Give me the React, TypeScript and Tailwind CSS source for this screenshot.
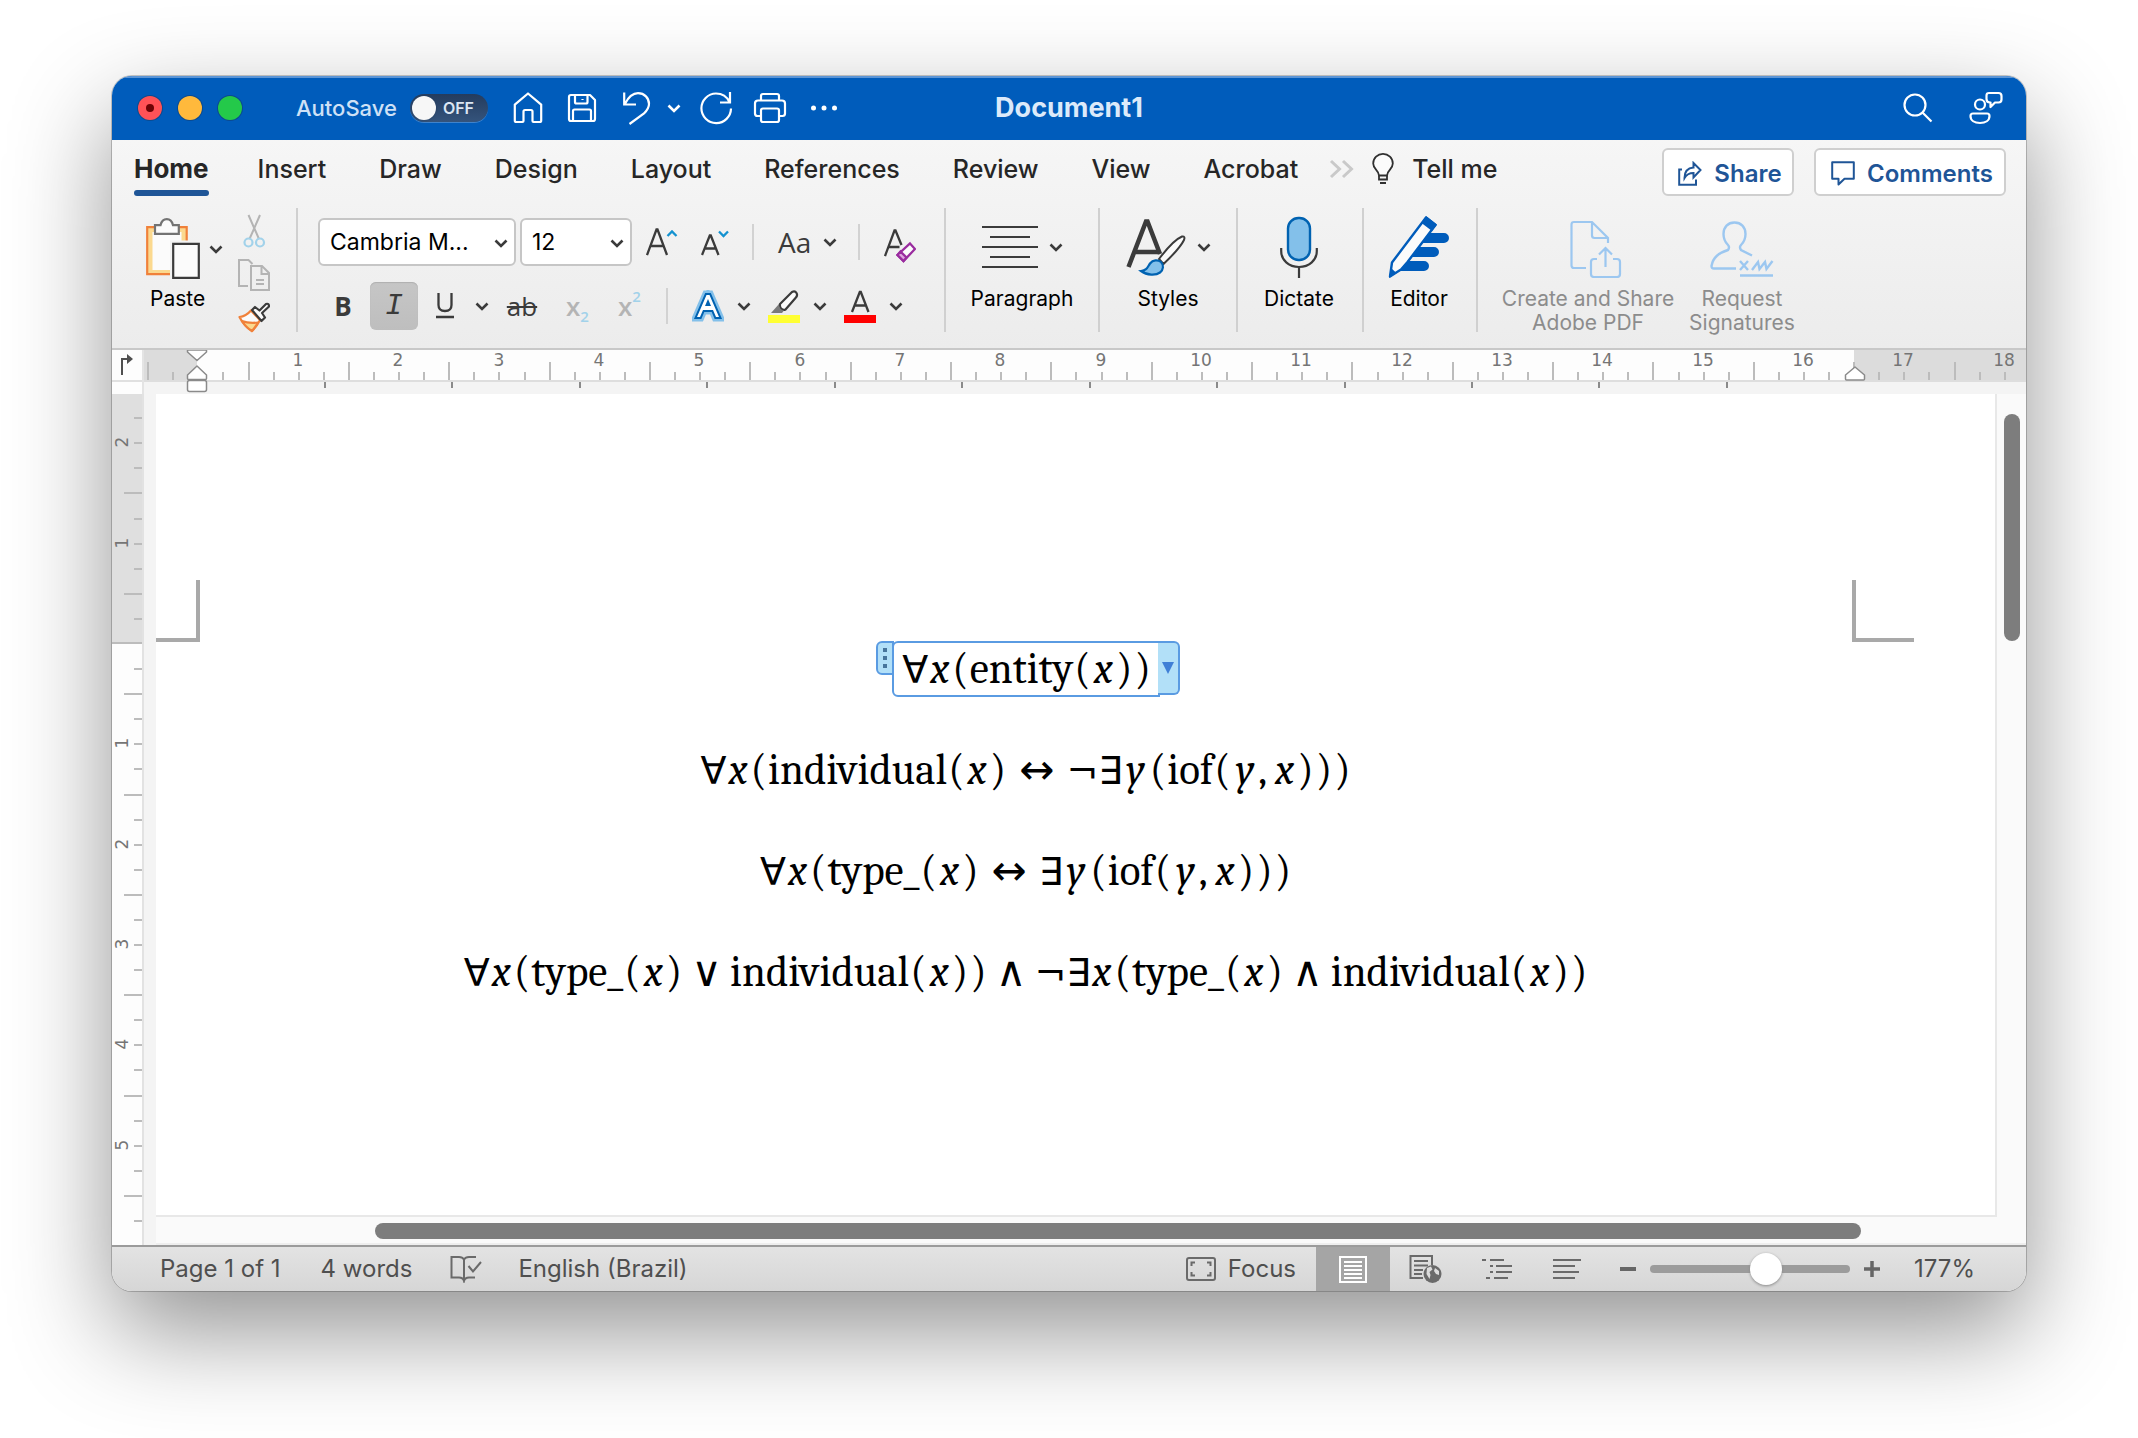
import { useState, type ReactNode } from "react";

const INK = "#3b3b3b";

/* ---------- small shared pieces ---------- */

function Chevron({ color = "#3b3b3b", size = 14 }: { color?: string; size?: number }) {
  return (
    <svg width={size} height={size} viewBox="0 0 14 14" fill="none" stroke={color} strokeWidth="2.6" className="shrink-0">
      <path d="M1.5 4.5 7 10l5.5-5.5" />
    </svg>
  );
}

function Divider() {
  return <div className="w-0.5 shrink-0 self-stretch bg-[#d0d0d0]" />;
}

function ShortDivider({ className }: { className: string }) {
  return <div className={`h-9 w-0.5 shrink-0 bg-[#d2d2d2] ${className}`} />;
}

/* ---------- title bar ---------- */

function TitleBar() {
  const [saving, setSaving] = useState(false);
  return (
    <header className="relative flex h-16 items-center border-t-2 border-[#5b95d6] bg-[#005cbb] pb-0.5 text-white">
      <div className="flex gap-4 pl-[26px]">
        <button aria-label="Close" className="flex size-6 items-center justify-center rounded-full bg-[#ff5257] ring-1 ring-[#0b4a8f]">
          <span className="size-2 rounded-full bg-[#6d0306]" />
        </button>
        <button aria-label="Minimize" className="size-6 rounded-full bg-[#ffb93c] ring-1 ring-[#0b4a8f]" />
        <button aria-label="Zoom window" className="size-6 rounded-full bg-[#24c94a] ring-1 ring-[#0b4a8f]" />
      </div>
      <label className="ml-[54px] flex items-center gap-[13px] text-[22px] font-medium text-[#cfe1f6]">
        AutoSave
        <input type="checkbox" className="sr-only" checked={saving} onChange={() => setSaving(!saving)} />
        <span className="flex h-7 w-[78px] items-center rounded-full bg-linear-to-b from-[#243c5e] to-[#35547c] pl-0.5 shadow-[0_1px_0_#3f83cc]">
          <span className="size-6 rounded-full bg-[#f7f7f7] shadow" />
          <span className="ml-[7px] text-base font-semibold text-[#dbe6f3]">OFF</span>
        </span>
      </label>
      <div className="ml-[25px] flex items-center">
        <button aria-label="Home">
          <svg width="30" height="34" viewBox="0 0 30 34" fill="none" stroke="white" strokeWidth="2.2" strokeLinejoin="round">
            <path d="M15 2.5 1.8 13.6V29.500q0 1.500 1.500 1.500H9.500q1 0 1-1V20.500q0-1.500 1.500-1.500h6q1.500 0 1.500 1.500V30q0 1 1 1h6.200q1.500 0 1.500-1.500V13.600Z" />
          </svg>
        </button>
        <button aria-label="Save" className="ml-6">
          <svg width="30" height="30" viewBox="0 0 30 30" fill="none" stroke="white" strokeWidth="2.2" strokeLinejoin="round">
            <path d="M4 2h19l5 5v19q0 2-2 2H4q-2 0-2-2V4q0-2 2-2ZM8 2v7q0 1.500 1.500 1.500H19q1.500 0 1.500-1.500V2M15.500 6v1M6 28V18q0-1.500 1.500-1.500h15Q24 16.500 24 18v10" />
          </svg>
        </button>
        <button aria-label="Undo" className="ml-[25px]">
          <svg width="30" height="34" viewBox="0 0 30 34" fill="none" stroke="white" strokeWidth="2.200">
            <path d="M2.200 1.500V13.500H14M3 12.800C6 7 10 2.200 16 2.200C22.500 2.200 27 7 27 13C27 17 25 19.500 22 22.500L7.500 33" />
          </svg>
        </button>
        <button aria-label="Undo options" className="ml-[15px]">
          <Chevron color="#ffffff" />
        </button>
        <button aria-label="Redo" className="ml-[18px]">
          <svg width="34" height="34" viewBox="0 0 34 34" fill="none" stroke="white" strokeWidth="2.200">
            <path d="M31 1v10.500H21M30.500 11A15 15 0 0 0 17 2.500A14.800 14.800 0 1 0 32 17.500" />
          </svg>
        </button>
        <button aria-label="Print" className="ml-5">
          <svg width="34" height="32" viewBox="0 0 34 32" fill="none" stroke="white" strokeWidth="2.200" strokeLinejoin="round">
            <path d="M8 8V4q0-2 2-2h14q2 0 2 2v4M8 24H4.500Q2 24 2 21.500v-10Q2 8.500 5 8.500h24q3 0 3 3v10q0 2.500-2.500 2.500H26M10 16.500h14q2 0 2 2V28q0 2-2 2H10q-2 0-2-2v-9.500q0-2 2-2Z" />
          </svg>
        </button>
        <button aria-label="More commands" className="ml-[23px]">
          <svg width="28" height="8" viewBox="0 0 28 8" fill="white">
            <circle cx="3.500" cy="4" r="2.500" />
            <circle cx="14" cy="4" r="2.500" />
            <circle cx="24.500" cy="4" r="2.500" />
          </svg>
        </button>
      </div>
      <h1 className="absolute left-1/2 -translate-x-1/2 text-[27px] font-bold text-[#dceafa]">Document1</h1>
      <div className="ml-auto flex items-center gap-9 pr-[23px]">
        <button aria-label="Search">
          <svg width="30" height="30" viewBox="0 0 30 30" fill="none" stroke="white" strokeWidth="2.200">
            <circle cx="12" cy="12" r="10.500" />
            <path d="m19.500 19.500 9 9" />
          </svg>
        </button>
        <button aria-label="Share and presence">
          <svg width="34" height="34" viewBox="0 0 34 34" fill="none" stroke="white" strokeWidth="2.200" strokeLinejoin="round">
            <circle cx="11" cy="13.500" r="5" />
            <path d="M4 22.500h14q2.500 0 2.500 2.500C20.500 29.500 16.500 32 11 32S1.500 29.500 1.500 25Q1.500 22.500 4 22.500ZM20 2h9.500Q32.500 2 32.500 5v3.500q0 3-3 3H26L21.500 16V11.500h-.5Q17.500 11.500 17.500 8V4.500Q17.500 2 20 2Z" />
          </svg>
        </button>
      </div>
    </header>
  );
}

/* ---------- tab strip ---------- */

const TABS = ["Home", "Insert", "Draw", "Design", "Layout", "References", "Review", "View", "Acrobat"];

function TabStrip() {
  return (
    <div className="flex h-[68px] items-start justify-between pr-5 pl-[22px]">
      <nav className="flex items-start gap-[53px] pt-3 text-[25px] leading-[34px] font-medium text-[#262626]">
        {TABS.map((tab, i) => (
          <button key={tab} className={i === 0 ? "-mr-1 text-[26px] font-bold" : ""}>
            {tab}
            {i === 0 && <span className="mt-1 block h-1.5 rounded-full bg-[#1f5597]" />}
          </button>
        ))}
        <button className="-ml-[22px] flex items-center" aria-label="Tell me">
          <svg width="26" height="34" viewBox="0 0 26 34" fill="none" stroke="#c9c9c9" strokeWidth="3">
            <path d="m2 9 8.500 8L2 25M14 9l8.500 8L14 25" />
          </svg>
          <svg width="22" height="32" viewBox="0 0 22 32" fill="none" stroke="#303030" strokeWidth="1.800" className="ml-[17px]">
            <path fill="#fbfbfb" d="M7 22.500C7 17 1.200 16.500 1.200 10.500A9.800 9.600 0 0 1 20.800 10.500C20.800 16.500 15 17 15 22.500Z" />
            <path d="M7 22.500v4h8v-4M8 30h6" />
          </svg>
          <span className="ml-[18px]">Tell me</span>
        </button>
      </nav>
      <div className="flex gap-5 pt-2 text-2xl font-semibold text-[#1f5597]">
        <button className="flex h-12 w-[132px] items-center justify-center gap-3 rounded-md border-2 border-[#cfcfcf] bg-white pt-1 pl-1">
          <svg width="24" height="25" viewBox="0 0 24 25" fill="none" stroke="#1f5597" strokeWidth="2" className="-mt-0.5">
            <path d="M4 8.500H1.200V23.800H18V18.500M6.500 17C6.500 11 9.500 7 15.500 6.500V2L22.500 9l-7 7.500V12C11.500 12 8.500 13.500 6.500 17Z" />
          </svg>
          Share
        </button>
        <button className="flex h-12 w-48 items-center justify-center gap-3 rounded-md border-2 border-[#cfcfcf] bg-white pt-1 pl-1">
          <svg width="24" height="25" viewBox="0 0 24 25" fill="none" stroke="#1f5597" strokeWidth="2" strokeLinejoin="round" className="-mt-0.5">
            <path d="M1.200 1.200h21.600v16.600H13.500L7.500 23.500V17.800H1.200Z" />
          </svg>
          Comments
        </button>
      </div>
    </div>
  );
}

/* ---------- ribbon ---------- */

function PasteIcon() {
  return (
    <svg width="54" height="62" viewBox="0 0 54 62" fill="none">
      <path fill="#fbd98f" stroke="#f0813a" strokeWidth="2.200" d="M1.200 9.200h39.500v47H1.200Z" />
      <path fill="#fbfbfb" d="M6.500 14h29v38h-29Z" />
      <path fill="#fbfbfb" stroke="#737373" strokeWidth="2.200" d="M9 7.200h5.500C15.500 3 17.500 1.200 20.800 1.200S26 3 27 7.200h5.800v8.600H9Z" />
      <path fill="#f2f2f2" d="M24 22.500h30V62H24Z" />
      <path fill="#fbfbfb" stroke={INK} strokeWidth="2.200" d="M27.200 25.800h25.600v34H27.200Z" />
    </svg>
  );
}

function ClipboardGroup() {
  return (
    <div className="flex shrink-0 pt-1.5 pr-[26px] pl-[34px]">
      <button className="flex w-[92px] flex-col items-start">
        <span className="flex items-center gap-[9px] pt-1">
          <PasteIcon />
          <Chevron />
        </span>
        <span className="mt-[5px] ml-1 text-[21px] leading-7">Paste</span>
      </button>
      <div className="flex flex-col gap-[11px]">
        <button aria-label="Cut">
          <svg width="32" height="34" viewBox="0 0 32 34" fill="none">
            <path stroke="#b4b4b4" strokeWidth="2" d="M10.500 1 21 25M22 1 11.500 25" />
            <circle cx="10.500" cy="28.500" r="4" stroke="#a2d2ea" strokeWidth="2.200" />
            <circle cx="22" cy="28.500" r="4" stroke="#a2d2ea" strokeWidth="2.200" />
          </svg>
        </button>
        <button aria-label="Copy">
          <svg width="32" height="32" viewBox="0 0 32 32" fill="none" stroke="#b4b4b4" strokeWidth="2">
            <path d="M10 27H1V1h9.500l4 4M13 7h11l7 7v17H13ZM23.500 7v8H31M18 21h8M18 25h8" />
          </svg>
        </button>
        <button aria-label="Format painter">
          <svg width="32" height="31" viewBox="0 0 32 31" fill="none" strokeWidth="2.200" strokeLinejoin="round">
            <path fill="#fbfbfb" stroke="#f0813a" d="M1.500 15C6 14.500 9.500 12.500 13 8.500L22 18C20 22 17.500 25.500 14 29C9 26 4.500 21 1.500 15Z" />
            <path fill="#fbd98f" stroke="#f0813a" d="M4 19c5 2 9 2.200 16 1.500-2 3.500-3.500 5.500-6 8.500C10.500 27 7 23.500 4 19Z" />
            <path fill="#fbfbfb" stroke={INK} d="m14 8 3-3 4.500 3.500L28 2q3-1 3 2.500L24 11l3 4.500-3.500 3.500Z" />
          </svg>
        </button>
      </div>
    </div>
  );
}

function Picker({ label, options, className }: { label: string; options: string[]; className: string }) {
  return (
    <div className={`relative h-12 shrink-0 ${className}`}>
      <select aria-label={label} className="h-full w-full appearance-none rounded-md border-2 border-[#c6c6c6] bg-white pl-2.5 text-[23px] text-black">
        {options.map((o) => (
          <option key={o}>{o}</option>
        ))}
      </select>
      <span className="pointer-events-none absolute top-[18px] right-2">
        <Chevron />
      </span>
    </div>
  );
}

function FontGroup() {
  return (
    <div className="flex w-[646px] shrink-0 flex-col gap-4 pt-2.5 pl-5">
      <div className="flex h-12 items-center">
        <Picker label="Font" options={["Cambria M..."]} className="w-[198px]" />
        <Picker label="Font size" options={["12"]} className="ml-1 w-28" />
        <button aria-label="Increase font size" className="ml-3.5">
          <svg width="32" height="30" viewBox="0 0 32 30" fill="none" stroke={INK} strokeWidth="2.300">
            <path d="M1 28 10.500 2.500h1L21 28M4.500 19h13.500" />
            <path stroke="#1492d0" d="m21.500 9 4.500-4.500L30.500 9" />
          </svg>
        </button>
        <button aria-label="Decrease font size" className="ml-[23px]">
          <svg width="32" height="30" viewBox="0 0 32 30" fill="none" stroke={INK} strokeWidth="2.300">
            <path d="M1 28 8.800 8.500h1L17.500 28M4 21.500h10.500" />
            <path stroke="#1492d0" d="M18 4.500 22.500 9 27 4.500" />
          </svg>
        </button>
        <ShortDivider className="ml-[19px]" />
        <button aria-label="Change case" className="ml-6 flex items-center gap-3 text-[28px] text-[#3b3b3b]">
          <span className="font-['Open_Sans']">Aa</span>
          <Chevron />
        </button>
        <ShortDivider className="ml-[21px]" />
        <button aria-label="Clear formatting" className="ml-6 pt-1.5">
          <svg width="32" height="35" viewBox="0 0 32 35" fill="none" stroke={INK} strokeWidth="2.300">
            <path d="M1 28 10.500 2.500h1L17.500 17M4.500 19h11" />
            <path fill="#fbfbfb" stroke="#9a2c9f" d="M26 15.500 31 21 19.500 33 13.500 27Z" />
            <path fill="#dca5dd" stroke="#9a2c9f" d="m16.500 23.500 6 6-3 3.500-6-6Z" />
          </svg>
        </button>
      </div>
      <div className="flex h-12 items-center text-[#3b3b3b]">
        <button aria-label="Bold" className="w-[52px] pr-0.5 text-center text-[26px] font-bold">
          <span className="font-['Open_Sans']">B</span>
        </button>
        <button aria-label="Italic" aria-pressed="true" className="flex h-12 w-12 items-center justify-center rounded-md bg-linear-to-b from-[#c6c6c6] to-[#bebebe] font-['Liberation_Mono'] text-[30px] italic shadow-[inset_0_1px_1px_#b0b0b0]">
          I
        </button>
        <button aria-label="Underline" className="ml-[18px]">
          <svg width="18" height="26" viewBox="0 0 18 26" fill="none" stroke={INK} strokeWidth="2.300">
            <path d="M2.500 0v12c0 4 2.500 6 6.500 6s6.500-2 6.500-6V0M0 24h18" />
          </svg>
        </button>
        <button aria-label="Underline style" className="ml-[21px]">
          <Chevron />
        </button>
        <button aria-label="Strikethrough" className="ml-[17px] w-8 text-center font-['Open_Sans'] text-[26px] line-through decoration-2">
          ab
        </button>
        <button aria-label="Subscript" className="ml-7 flex h-9 w-[26px] font-['Open_Sans'] text-[26px] font-semibold text-[#b4b4b4]">
          <span className="self-center leading-9">x</span>
          <span className="self-end text-[15px] leading-4 text-[#a2d2ea]">2</span>
        </button>
        <button aria-label="Superscript" className="ml-[26px] flex h-9 w-[26px] font-['Open_Sans'] text-[26px] font-semibold text-[#b4b4b4]">
          <span className="self-center leading-9">x</span>
          <span className="self-start text-[15px] leading-4 text-[#a2d2ea]">2</span>
        </button>
        <ShortDivider className="ml-[22px]" />
        <button aria-label="Text effects" className="ml-6">
          <svg width="32" height="32" viewBox="0 0 32 32" fill="none" strokeLinejoin="miter">
            <path stroke="#83c0ea" strokeWidth="9" d="M5 27 14.500 5h3L27 27h-3l-3-7H11l-3 7ZM12.500 16h7L16 8Z" />
            <path fill="#fff" stroke="#0062b1" strokeWidth="4" d="M5 27 14.500 5h3L27 27h-3l-3-7H11l-3 7ZM12.500 16h7L16 8Z" />
            <path fill="#fff" d="M5 27 14.500 5h3L27 27h-3l-3-7H11l-3 7Z" />
            <path fill="#0062b1" d="m13 16 3-7 3 7Z" />
          </svg>
        </button>
        <button aria-label="Text effects options" className="ml-[13px]">
          <Chevron />
        </button>
        <button aria-label="Highlight color" className="ml-[17px]">
          <svg width="32" height="33" viewBox="0 0 32 33" fill="none">
            <path fill="#fbfbfb" stroke={INK} strokeWidth="2.200" strokeLinejoin="round" d="m12 14 12-12q3-1.500 4.500 1T27.500 8L17.500 19.500q-2 1-4-.5T12 14Z" />
            <path fill="#7a7a7a" d="M11 14c0 4 2 6 5 6.500L14 23H3Z" />
            <path fill="#ffff33" d="M0 25h32v8H0Z" />
          </svg>
        </button>
        <button aria-label="Highlight options" className="ml-[13px]">
          <Chevron />
        </button>
        <button aria-label="Font color" className="ml-[17px]">
          <svg width="32" height="33" viewBox="0 0 32 33" fill="none">
            <path stroke={INK} strokeWidth="2.300" d="M8 22 15.800 2h1L24.500 22M11 15.500h10.500" />
            <path fill="#ff0000" d="M0 25h32v8H0Z" />
          </svg>
        </button>
        <button aria-label="Font color options" className="ml-[13px]">
          <Chevron />
        </button>
      </div>
    </div>
  );
}

function BigButton({ lines, icon, menu, className }: { lines: string[]; icon: ReactNode; menu?: boolean; className: string }) {
  return (
    <button className={`flex shrink-0 flex-col items-center justify-start pt-1.5 text-[21px] leading-6 ${className}`}>
      <span className="flex h-[65px] shrink-0 items-center gap-[11px]">
        {icon}
        {menu && <Chevron />}
      </span>
      <span className="mt-2">
        {lines.map((l) => (
          <span key={l} className="block whitespace-nowrap">
            {l}
          </span>
        ))}
      </span>
    </button>
  );
}

function Ribbon() {
  return (
    <div className="flex h-[124px] items-stretch">
      <ClipboardGroup />
      <Divider />
      <FontGroup />
      <Divider />
      <BigButton
        className="w-[152px]"
        lines={["Paragraph"]}
        menu
        icon={
          <svg width="56" height="44" viewBox="0 0 56 44" stroke={INK} strokeWidth="2">
            <path d="M0 2h56M8 12h40M0 22h56M8 32h40M0 42h56" />
          </svg>
        }
      />
      <Divider />
      <BigButton
        className="w-[136px]"
        lines={["Styles"]}
        menu
        icon={
          <svg width="60" height="58" viewBox="0 0 60 58" fill="none" className="ml-px">
            <path stroke={INK} strokeWidth="4.500" d="M2.500 49 20 3.500h1.500L34 36M9 34h25" />
            <path fill="#fbfbfb" stroke={INK} strokeWidth="2" d="M33 41C42 29 50 21 56 18.500q3.500-.5 2 3.500C54 30 47 37 37.500 46Z" />
            <path fill="#83c0ea" stroke="#0062b1" strokeWidth="2.200" d="M15 53c6-.5 6.500-4 9-7.500 3-4 8-4 11-1.500 3 3 2.500 8-1 10.500C30 57.500 21 57.500 15 53Z" />
          </svg>
        }
      />
      <Divider />
      <BigButton
        className="w-[124px] pr-0.5"
        lines={["Dictate"]}
        icon={
          <svg width="38" height="62" viewBox="0 0 38 62" fill="none">
            <rect x="8" y="2" width="22" height="42" rx="10.500" fill="#83c0ea" stroke="#0062b1" strokeWidth="2.400" />
            <path stroke={INK} strokeWidth="2.200" d="M1.200 32v3c0 9 7.500 16 17.800 16s17.800-7 17.800-16v-3M19 51v11" />
          </svg>
        }
      />
      <Divider />
      <BigButton
        className="w-[112px] pr-0.5"
        lines={["Editor"]}
        icon={
          <svg width="62" height="62" viewBox="0 0 62 62">
            <path fill="#005cbb" d="M34 17h22a5 5 0 0 1 0 10H28ZM25 31h21a5 5 0 0 1 0 10H20ZM16 45h20a5 5 0 0 1 0 10H10Z" />
            <path fill="#fbfbfb" stroke="#005cbb" strokeWidth="2.400" strokeLinejoin="round" d="M38 1.500 47.500 9 19.500 46 13 53.500 2 60.500 4 46.500Z" />
            <path fill="#005cbb" d="M38 0 49 8.500l-5 6.500L33.500 7ZM3 52l5.500 5L1 62Z" />
          </svg>
        }
      />
      <Divider />
      <BigButton
        className="ml-4 w-[188px] text-[#8c8c8c]"
        lines={["Create and Share", "Adobe PDF"]}
        icon={
          <svg width="52" height="58" viewBox="0 0 52 58" fill="none" stroke="#9cc7f0" strokeWidth="2.200" className="mt-1 ml-4">
            <path d="M16 48H4q-2.500 0-2.500-2.500v-41Q1.500 2 4 2H22L38 18v5M22 2v13.500q0 2.500 2.500 2.500H38M27 39H24q-3 0-3 3v12q0 3 3 3h23q3 0 3-3V42q0-3-3-3h-4M35.500 47V28.500M29 34.500 35.500 28l6.500 6.500" />
          </svg>
        }
      />
      <BigButton
        className="w-[120px] text-[#8c8c8c]"
        lines={["Request", "Signatures"]}
        icon={
          <svg width="64" height="56" viewBox="0 0 64 56" fill="none" stroke="#9cc7f0" strokeWidth="2.400" className="mt-1">
            <path d="M26 47.500H4q-2.500 0-2.500-2.500C3 36 9 32 18 29q2-3 0-5c-3-3-4.500-6.500-4.500-11C13.500 6 18 1.500 24.500 1.500S35.500 6 35.500 13c0 4.500-1.500 8-4.500 11q-2 2 0 5l11 5.500M30 40l8 9M38 40l-8 9M42 49l6-8 1.500 7 5.500-7 1.500 7 6-8M30 54.500h33" />
          </svg>
        }
      />
    </div>
  );
}

/* ---------- rulers ---------- */

const CM = 100.35;

function HorizontalRuler() {
  const ticks = Array.from({ length: 76 }, (_, i) => i - 2);
  const numbers = Array.from({ length: 18 }, (_, i) => i + 1);
  const stops = Array.from({ length: 12 }, (_, i) => i + 1);
  return (
    <div className="flex h-11 bg-[#f4f4f4]">
      <div className="w-8 shrink-0 border-r-2 border-[#e4e4e4] bg-[#fdfdfd]">
        <svg width="30" height="32" viewBox="0 0 30 32" fill="none" stroke="#4f4f4f" strokeWidth="2">
          <path d="M10 25V9h8" />
          <path fill="#4f4f4f" stroke="none" d="m15 4 6 5-6 5Z" />
          <path stroke="#e0e0e0" d="M0 31h30" />
        </svg>
      </div>
      <svg className="h-11 min-w-0 flex-1" role="img" aria-label="Horizontal ruler">
        <rect width="100%" height="32" fill="#fdfdfd" />
        <rect width="53" height="30" fill="#dcdcdc" />
        <rect x="1710" width="100%" height="30" fill="#dcdcdc" />
        <path d="M0 31H4000" stroke="#dedede" strokeWidth="2" />
        {ticks.map((t) => {
          const major = Math.abs(t % 4) === 2;
          return <rect key={t} x={Math.round(54.4 + (t * CM) / 4) - 1} y={major ? 12 : 22} width="2" height={major ? 18 : 8} fill="#bcbcbc" />;
        })}
        {numbers.map((n) => (
          <text key={n} x={Math.round(53.5 + n * CM)} y="16" textAnchor="middle" fontSize="17" fill="#757575" fontFamily="DejaVu Sans">
            {n}
          </text>
        ))}
        {stops.map((n) => (
          <rect key={n} x={Math.round(53.5 + n * 127.45) - 1} y="32" width="2" height="6" fill="#8a8a8a" />
        ))}
        <g fill="#fff" stroke="#8a8a8a" strokeWidth="1.500" strokeLinejoin="round">
          <path d="M43.500 0h19v2L53 10.500 43.500 2Z" />
          <path d="M53 16l9.500 9v3.500q0 1-1 1h-17q-1 0-1-1V25Z" />
          <rect x="43.500" y="30.500" width="19" height="11" rx="2" />
          <path d="M1711 17l9.500 8v4q0 1-1 1h-17q-1 0-1-1v-4Z" />
        </g>
      </svg>
    </div>
  );
}

function VerticalRuler() {
  const ticks = Array.from({ length: 33 }, (_, i) => i - 9);
  return (
    <svg className="w-8 shrink-0 self-stretch" role="img" aria-label="Vertical ruler">
      <rect width="30" height="100%" fill="#fdfdfd" />
      <rect width="30" height="249" fill="#dfdfdf" />
      <rect y="248" width="30" height="2" fill="#bcbcbc" />
      <rect x="30" width="2" height="100%" fill="#e2e2e2" />
      {ticks
        .filter((t) => t !== 0)
        .map((t) => {
          const major = Math.abs(t % 4) === 2;
          return <rect key={t} x={major ? 12 : 22} y={Math.round(250 + (t * CM) / 4) - 1} width={major ? 18 : 8} height="2" fill="#bcbcbc" />;
        })}
      {[-2, -1, 1, 2, 3, 4, 5].map((n) => (
        <text key={n} transform={`translate(16 ${Math.round(249 + n * CM)}) rotate(-90)`} textAnchor="middle" fontSize="17" fill="#757575" fontFamily="DejaVu Sans">
          {Math.abs(n)}
        </text>
      ))}
    </svg>
  );
}

/* ---------- document ---------- */

function Formula({ text }: { text: string }) {
  const parts = text.match(/[a-z]{3,}_?|[xy]|[()]|,|[∀∃¬]|↔|[∨∧]/g) ?? [];
  return (
    <span className="flex h-14 items-baseline text-[43px] leading-[56px] whitespace-nowrap text-black">
      {parts.map((p, i) => {
        if (p === "x") return <i key={i} className="px-0.5">{p}</i>;
        if (p === "y") return <i key={i} className="px-1">{p}</i>;
        if (p === "(" || p === ")") return <span key={i} className="px-px">{p}</span>;
        if (p === ",") return <span key={i} className="pr-1.5">{p}</span>;
        if (p === "∀" || p === "∃" || p === "¬") return <span key={i} className="font-['DejaVu_Sans'] text-[38px] leading-none">{p}</span>;
        if (p === "↔") return <span key={i} className="px-3 font-['DejaVu_Sans'] text-[42px] leading-none">{p}</span>;
        if (p === "∨" || p === "∧") return <span key={i} className="px-2 font-['DejaVu_Sans'] text-[42px] leading-none">{p}</span>;
        return <span key={i}>{p}</span>;
      })}
    </span>
  );
}

function DocumentArea() {
  return (
    <main className="flex min-h-0 flex-1 bg-[#fafafa]">
      <VerticalRuler />
      <div className="w-3 shrink-0 bg-[#f4f4f4]" />
      <div className="flex min-w-0 flex-1 flex-col">
        <div className="flex min-h-0 flex-1">
          <section className="relative flex min-w-0 flex-1 flex-col items-center gap-[45px] border-r-2 border-b-2 border-[#e8e8e8] bg-white pt-[247px] pr-[143px] pl-11 font-[Cambria,Caladea,'Liberation_Serif',serif]">
            <div className="absolute top-[186px] left-0 h-[62px] w-11 border-r-4 border-b-4 border-[#a9a9a9]" />
            <div className="absolute top-[186px] right-[81px] h-[62px] w-[62px] border-b-4 border-l-4 border-[#a9a9a9]" />
            <div className="relative flex h-14 items-center rounded-md rounded-r-none border-2 border-[#5a9be2] pr-1.5 pl-2">
              <button aria-label="Move equation" className="absolute -top-0.5 -left-[18px] flex h-[34px] w-[18px] flex-col items-center justify-center gap-1 rounded-l-md border-2 border-[#5a9be2] bg-[#b2e0f8]">
                <span className="size-1 bg-[#47759c]" />
                <span className="size-1 bg-[#47759c]" />
                <span className="size-1 bg-[#47759c]" />
              </button>
              <Formula text="∀x(entity(x))" />
              <button aria-label="Equation options" className="absolute -top-0.5 -right-[22px] flex h-[54px] w-[22px] items-center justify-center rounded-r-md border-2 border-l-0 border-[#5a9be2] bg-[#b2e0f8]">
                <svg width="12" height="12" viewBox="0 0 12 12" fill="#3f7fd6">
                  <path d="M0 0h12L6 12Z" />
                </svg>
              </button>
            </div>
            <Formula text="∀x(individual(x)↔¬∃y(iof(y,x)))" />
            <Formula text="∀x(type_(x)↔∃y(iof(y,x)))" />
            <Formula text="∀x(type_(x)∨individual(x))∧¬∃x(type_(x)∧individual(x))" />
          </section>
          <div className="flex w-[29px] shrink-0 justify-end pt-5 pr-1.5">
            <div className="h-[227px] w-4 rounded-full bg-[#7d7d7d]" />
          </div>
        </div>
        <div className="flex h-7 items-center border-b-2 border-[#eeeeee] pt-0.5 pr-[165px] pl-[219px]">
          <div className="h-4 flex-1 rounded-full bg-[#7d7d7d]" />
        </div>
      </div>
    </main>
  );
}

/* ---------- status bar ---------- */

function StatusBar() {
  const [zoom, setZoom] = useState(177);
  return (
    <footer className="flex h-[46px] items-center border-t-2 border-[#9b9b9b] bg-linear-to-b from-[#e3e3e3] to-[#d6d6d6] pl-12 text-2xl text-[#4f4f4f]">
      <button>Page 1 of 1</button>
      <button className="ml-10">4 words</button>
      <button aria-label="Proofing" className="ml-[38px]">
        <svg width="32" height="28" viewBox="0 0 32 28" fill="none" stroke="#6a6a6a" strokeWidth="2">
          <path d="M14 4.500Q12.500 2 9 2H1.500v20.500H9q4 0 5 3.500 1-3.500 5-3.500h6M14 26V4.500Q15.500 2 19 2h7M18.500 11l4.500 5.500L31 7" />
        </svg>
      </button>
      <button className="ml-9">English (Brazil)</button>
      <div className="ml-auto flex h-full items-center pr-[49px]">
        <button className="mr-5 flex items-center gap-3">
          <svg width="30" height="24" viewBox="0 0 30 24" fill="none" stroke="#6a6a6a" strokeWidth="2">
            <rect x="1" y="1" width="28" height="22" rx="2" />
            <path d="M5.500 9V5.500H9M21 5.500h3.500V9M24.500 15v3.500H21M9 18.500H5.500V15" />
          </svg>
          Focus
        </button>
        <button aria-label="Print layout" aria-pressed="true" className="flex h-full w-[74px] items-center justify-center bg-[#a5a5a5]">
          <svg width="28" height="27" viewBox="0 0 28 27" fill="none" stroke="white" strokeWidth="2">
            <path d="M1 1h26v25H1ZM5 6h18M5 10h18M5 14h18M5 18h18M5 22h18" />
          </svg>
        </button>
        <button aria-label="Web layout" className="ml-[19px]">
          <svg width="34" height="30" viewBox="0 0 34 30" fill="none" stroke="#6a6a6a" strokeWidth="2">
            <path d="M14 24H1.500V2H23v9M5 7h14M5 11.500h14M5 16h9M5 20h8" />
            <circle cx="23.500" cy="20" r="9" fill="#6a6a6a" stroke="none" />
            <path fill="#dcdcdc" stroke="none" d="m18 14 4-1.500 1.500 3-3 2.500 1 3-1 4-3-5ZM26 14l4 3v4l-3-1-2-3Z" />
          </svg>
        </button>
        <button aria-label="Outline" className="ml-[39px]">
          <svg width="30" height="22" viewBox="0 0 30 22" stroke="#6a6a6a" strokeWidth="2">
            <path d="M0 2h4M8 2h14M8 8h3M14 8h16M8 14h3M14 14h16M4 20h4M12 20h14" />
          </svg>
        </button>
        <button aria-label="Draft" className="ml-[41px]">
          <svg width="28" height="22" viewBox="0 0 28 22" stroke="#6a6a6a" strokeWidth="2">
            <path d="M0 2h28M0 8h22M0 14h26M0 20h22" />
          </svg>
        </button>
        <button aria-label="Zoom out" className="ml-[39px]">
          <svg width="16" height="16" viewBox="0 0 16 16" stroke="#666" strokeWidth="4">
            <path d="M0 8h16" />
          </svg>
        </button>
        <input
          type="range"
          aria-label="Zoom"
          min="10"
          max="290"
          value={zoom}
          onChange={(e) => setZoom(Number(e.target.value))}
          className="mx-3.5 h-2 w-[200px] appearance-none rounded-full bg-[#9c9c9c] [&::-webkit-slider-thumb]:size-8 [&::-webkit-slider-thumb]:appearance-none [&::-webkit-slider-thumb]:rounded-full [&::-webkit-slider-thumb]:bg-white [&::-webkit-slider-thumb]:shadow-[0_1px_3px_#888]"
        />
        <button aria-label="Zoom in">
          <svg width="16" height="16" viewBox="0 0 16 16" stroke="#666" strokeWidth="3.500">
            <path d="M0 8h16M8 0v16" />
          </svg>
        </button>
        <button className="ml-[34px] w-[63px] text-left">{zoom}%</button>
      </div>
    </footer>
  );
}

export default function App() {
  return (
    <div className="flex min-h-screen flex-col overflow-hidden bg-white px-28 pt-[76px] pb-[147px] font-[Inter,'Liberation_Sans',sans-serif]">
      <div className="flex flex-1 flex-col rounded-[20px] shadow-[0_0_0_1px_rgba(0,0,0,0.2),0_40px_100px_rgba(0,0,0,0.43)]">
        <div className="flex flex-1 flex-col overflow-hidden rounded-[20px]">
          <TitleBar />
          <div className="border-b-2 border-[#c8c8c8] bg-linear-to-b from-[#f6f6f6] to-[#ececec] pb-4 text-black">
            <TabStrip />
            <Ribbon />
          </div>
          <HorizontalRuler />
          <DocumentArea />
          <StatusBar />
        </div>
      </div>
    </div>
  );
}
